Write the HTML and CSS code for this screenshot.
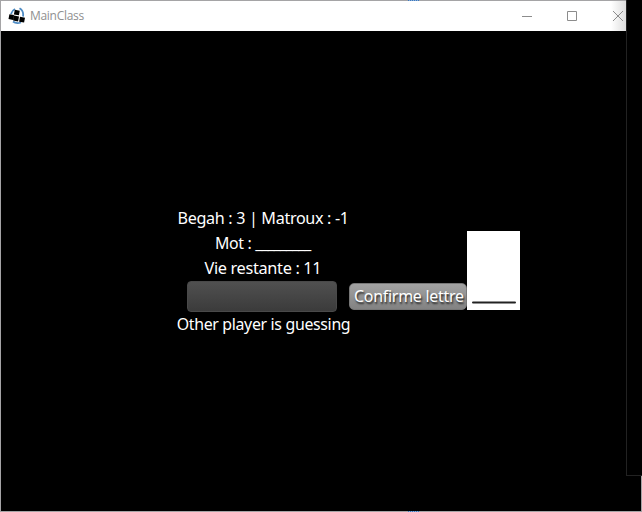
FILE: index.html
```html
<!DOCTYPE html>
<html lang="fr">
<head>
<meta charset="utf-8">
<title>MainClass</title>
<link rel="stylesheet" href="styles.css">
</head>
<body>
<div class="window">
  <header class="titlebar">
    <svg class="logo" width="18" height="18" viewBox="0 0 18 18">
      <g fill="none" stroke="#4d8bc4" stroke-width="1.800"><path d="M3 7Q4 3.500 7 2M11.500 1.300Q16 4 15 9.500M5 14.500Q8 17 13 15.500"/></g>
      <path d="M6.800 2.800l5 .9-.9 4.600-5-.9zM1.400 7.200l4.600 .8-.9 4.900-4.600-.8zM6 8.600l5 .9-.9 5-5-.9zM12 9.800l5 .9-.9 4.900-5-.9z" fill="#000"/>
    </svg>
    <span class="title">MainClass</span>
    <svg class="controls" width="104" height="12" viewBox="0 0 104 12" fill="none" stroke="#8c8c8c">
      <path d="M0 6.500h10M45.500 1.500h9v9h-9zM91 1l10 10M101 1L91 11"/>
    </svg>
  </header>
  <main class="game">
    <section class="status">
      <p class="line scores">Begah : 3 | Matroux : -1</p>
      <p class="line word">Mot : <span class="blanks">_________</span></p>
      <p class="line lives">Vie restante : 11</p>
      <div class="field"></div>
      <p class="line turn">Other player is guessing</p>
    </section>
    <div class="confirm"><span class="label">Confirme lettre</span></div>
    <svg class="drawing" width="53" height="79" viewBox="0 0 53 79"><path d="M6 71.500H48" stroke="#222" stroke-width="2" stroke-linecap="round"/></svg>
  </main>
</div>
<div class="glint glint-top"></div>
<div class="glint glint-bottom"></div>
<div class="edge"></div>
</body>
</html>
```
FILE: styles.css
```css
* { box-sizing: border-box; }
body { margin: 0; width: 642px; height: 512px; overflow: hidden; background: #000; position: relative; }
.window { height: 512px; border: 1px solid #a5a4a6; display: flex; flex-direction: column; }
.titlebar { height: 30px; background: linear-gradient(90deg, #fff 610px, #ddd 625px); display: flex; align-items: center; padding-left: 7px; }
.logo { flex: none; margin-top: -1px; }
.title { margin-left: 4px; font: 12px/16px "Open Sans", sans-serif; color: #909090; letter-spacing: -0.3px; }
.controls { margin-left: auto; margin-right: 15px; }
.game { flex: 1; display: flex; align-items: flex-start; padding: 175px 0 0 175px; color: #fff; font: 17px/23px "Noto Sans", sans-serif; }
.status { width: 173px; display: flex; flex-direction: column; align-items: center; }
.line { margin: 0; height: 25px; white-space: nowrap; letter-spacing: -0.35px; transform: translateX(0.6px) scaleX(0.935); }
.scores { transform: translateX(1px) scaleX(0.95); }
.lives { transform: scaleX(0.96); }
.blanks { letter-spacing: -1px; }
.field { width: 150px; height: 31px; margin-right: 1px; border: 1px solid #494949; border-radius: 4px; background: linear-gradient(#505050, #3b3b3b); }
.confirm { width: 118px; height: 27px; margin-top: 77px; padding-bottom: 2px; border: 1px solid #777; border-radius: 5px; background: linear-gradient(#a2a2a2, #828282); display: flex; align-items: center; justify-content: center; white-space: nowrap; letter-spacing: -0.3px; text-shadow: 1px 2px 2px #222; }
.label { transform: translateX(0.5px) scaleX(0.94); }
.drawing { flex: none; margin-top: 25px; background: #fff; }
.glint { position: absolute; left: 408px; width: 11px; height: 1px; background: repeating-linear-gradient(90deg, #3d78bd 0 1px, #8fb1d8 1px 2px); }
.glint-top { top: 0; }
.glint-bottom { bottom: 0; }
.edge { position: absolute; top: 0; right: 0; width: 16px; height: 476px; background: #000; border-left: 1px solid #222; border-bottom: 1px solid #222; }
```
